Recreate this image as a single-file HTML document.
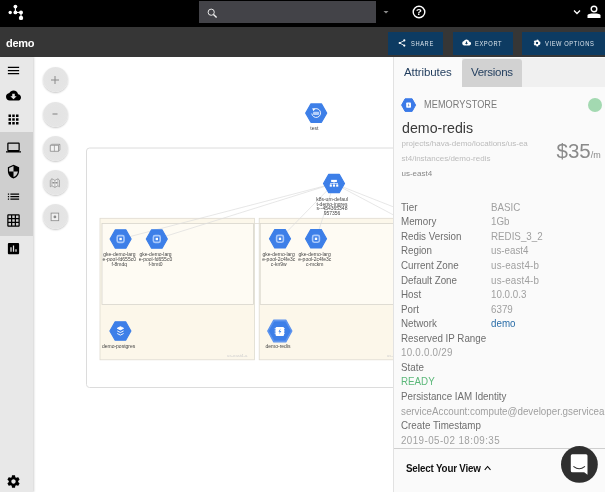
<!DOCTYPE html>
<html><head><meta charset="utf-8">
<style>
*{box-sizing:border-box;margin:0;padding:0}
html,body{width:605px;height:492px;overflow:hidden;background:#fff;font-family:"Liberation Sans",sans-serif;}
#top{position:absolute;left:0;top:0;width:605px;height:27px;background:#000}
#search{position:absolute;left:198.500px;top:1px;width:177.500px;height:21.800px;background:#434348}
#bar2{position:absolute;left:0;top:27px;width:605px;height:30px;background:#363636}
#title{position:absolute;left:6px;top:36.5px;color:#fff;font-weight:bold;font-size:11px;letter-spacing:-0.3px}
.btn{position:absolute;top:32px;height:23px;background:#0d3b62;color:#dbe4ec;font-size:7.2px;letter-spacing:0.75px;line-height:22px;white-space:nowrap}
.btn span{position:absolute;top:1px;transform:scaleX(0.8);transform-origin:0 50%}
#side{position:absolute;left:0;top:57px;width:33px;height:435px;background:#e8e8e8;box-shadow:1px 0 2px rgba(0,0,0,0.18)}
#sel{position:absolute;left:0;top:132px;width:33px;height:104px;background:#cfcfcf}
.ico{position:absolute}
.rb{position:absolute;left:42px;width:26px;height:26px}
.rb i{position:absolute;left:0.500px;top:0.800px;width:25px;height:25px;border-radius:50%;background:radial-gradient(circle,#e3e3e3 0%,#e5e5e5 70%,#ebebeb 100%);box-shadow:0 1px 2px rgba(0,0,0,0.22)}
#canvas{position:absolute;left:34px;top:57px;width:359px;height:435px;overflow:hidden}
#panel{position:absolute;left:393px;top:57px;width:212px;height:435px;background:#fafafa;border-left:1px solid #e2e2e2;overflow:hidden}
#tabs{position:absolute;left:0;top:1px;width:212px;height:29px;background:#f0f0f0}
#tabA{position:absolute;left:0;top:-1px;width:68px;height:30px;background:#fafafa;color:#1f3b5c;font-size:11.5px;letter-spacing:-0.1px;line-height:30px;padding-left:10px}
#tabV{position:absolute;left:68px;top:1px;width:60.300px;height:28px;background:#d2d2d2;border-radius:3px 3px 0 0;color:#1f3b5c;font-size:11.5px;letter-spacing:-0.3px;line-height:27px;padding-left:9px}
.t{position:absolute;white-space:nowrap;transform-origin:0 50%}
.lab{color:#6e6e6e;font-size:10.2px;transform:scaleX(0.96);margin-top:0.3px;margin-left:-0.8px}
.val{color:#a0a0a0;font-size:10.2px;transform:scaleX(0.96);margin-top:0.3px;margin-left:-0.8px}
#wrap{position:absolute;left:0;top:0;width:605px;height:492px;will-change:transform;overflow:hidden}
</style></head><body><div id="wrap">
<div id="top">
  <svg class="ico" style="left:0px;top:0px" width="30" height="27" viewBox="0 0 30 27"><g fill="#fff" stroke="#fff" stroke-width="1.1"><line x1="15.4" y1="6.6" x2="15.4" y2="12.4"/><line x1="15.4" y1="12.4" x2="21" y2="12.4"/><line x1="21" y1="12.4" x2="21" y2="17.9"/><circle cx="10.2" cy="12.5" r="1.7" stroke="none"/><circle cx="15.4" cy="6.6" r="1.9" stroke="none"/><circle cx="15.4" cy="12.4" r="1.9" stroke="none"/><circle cx="21" cy="12.4" r="2" stroke="none"/><circle cx="21" cy="17.9" r="2.2" stroke="none"/></g></svg>
  <div id="search"><svg class="ico" style="left:8.500px;top:7.200px" width="11" height="11" viewBox="0 0 11 11"><circle cx="4.200" cy="4.200" r="3.100" fill="none" stroke="#e8e8e8" stroke-width="1"/><line x1="6.500" y1="6.500" x2="9.600" y2="9.600" stroke="#f4f4f4" stroke-width="1.400"/></svg></div>
  <svg class="ico" style="left:381.500px;top:10px" width="8" height="5" viewBox="0 0 8 5"><path d="M1.500 1 L4 3.600 L6.500 1 Z" fill="#8a8a8a"/></svg>
  <svg class="ico" style="left:410.500px;top:3.500px" width="16" height="16" viewBox="0 0 16 16"><circle cx="8" cy="8" r="5.800" fill="none" stroke="#fff" stroke-width="1.4"/><text x="8" y="11.3" font-size="9.5" font-weight="bold" text-anchor="middle" fill="#fff" font-family="Liberation Sans, sans-serif">?</text></svg>
  <svg class="ico" style="left:572px;top:8px" width="10" height="8" viewBox="0 0 10 8"><path d="M2 2.5 L5 5.5 L8 2.5" fill="none" stroke="#fff" stroke-width="1.3"/></svg>
  <svg class="ico" style="left:586px;top:4px" width="16" height="16" viewBox="0 0 16 16"><circle cx="8" cy="5" r="2.8" fill="none" stroke="#fff" stroke-width="1.4"/><path d="M1.500 14 V11.600 C1.500 10 4 9.500 8 9.500 C12 9.500 14.500 10 14.500 11.600 V14 Z" fill="#fff"/></svg>
</div>
<div id="bar2"></div>
<div id="title">demo</div>
<div class="btn" style="left:388px;width:55px"><svg class="ico" style="left:10px;top:7px" width="8" height="8" viewBox="0 0 8 8"><g fill="#fff" stroke="#fff" stroke-width="0.8"><line x1="6.300" y1="1.500" x2="1.700" y2="4"/><line x1="1.700" y1="4" x2="6.300" y2="6.500"/><circle cx="6.300" cy="1.400" r="1.100" stroke="none"/><circle cx="1.700" cy="4" r="1.100" stroke="none"/><circle cx="6.300" cy="6.600" r="1.100" stroke="none"/></g></svg><span style="left:23px">SHARE</span></div>
<div class="btn" style="left:453px;width:60px"><svg class="ico" style="left:9px;top:7px" width="9" height="7" viewBox="0 0 9 7"><path d="M7.300 2.700 A2.900 2.900 0 0 0 1.900 2 A2.300 2.300 0 0 0 2.300 6.500 H7 A1.900 1.900 0 0 0 7.300 2.700 Z" fill="#fff"/><path d="M4.500 5.600 L2.900 3.900 H3.900 V2.600 H5.100 V3.900 H6.100 Z" fill="#0d3b62"/></svg><span style="left:22px">EXPORT</span></div>
<div class="btn" style="left:522px;width:83px"><svg class="ico" style="left:11px;top:7px" width="8" height="8" viewBox="0 0 8 8"><circle cx="4" cy="4" r="2.300" fill="none" stroke="#fff" stroke-width="2.200" stroke-dasharray="1.300 1.100"/><circle cx="4" cy="4" r="2" fill="none" stroke="#fff" stroke-width="1.400"/></svg><span style="left:23px">VIEW OPTIONS</span></div>

<div id="side"><div id="sel" style="top:75px"></div>
<svg class="ico" style="left:5.9px;top:5.7px" width="15" height="15" viewBox="0 0 24 24"><path d="M3 18h18v-2H3v2zm0-5h18v-2H3v2zm0-7v2h18V6H3z" fill="#000"/></svg>
<svg class="ico" style="left:5.9px;top:30.5px" width="15" height="15" viewBox="0 0 24 24"><path d="M19.35 10.04C18.67 6.59 15.64 4 12 4 9.11 4 6.6 5.64 5.35 8.04 2.34 8.36 0 10.91 0 14c0 3.31 2.69 6 6 6h13c2.76 0 5-2.24 5-5 0-2.64-2.05-4.78-4.65-4.960zM17 13l-5 5-5-5h3V9h4v4h3z" fill="#000"/></svg>
<svg class="ico" style="left:5.9px;top:54.5px" width="15" height="15" viewBox="0 0 24 24"><path d="M4 8h4V4H4v4zm6 12h4v-4h-4v4zm-6 0h4v-4H4v4zm0-6h4v-4H4v4zm6 0h4v-4h-4v4zm6-10v4h4V4h-4zm-6 4h4V4h-4v4zm6 6h4v-4h-4v4zm0 6h4v-4h-4v4z" fill="#000"/></svg>
<svg class="ico" style="left:5.9px;top:82.5px" width="15" height="15" viewBox="0 0 24 24"><path d="M20 18c1.100 0 1.990-.9 1.990-2L22 6c0-1.100-.9-2-2-2H4c-1.100 0-2 .9-2 2v10c0 1.100.9 2 2 2H0v2h24v-2h-4zM4 6h16v10H4V6z" fill="#000"/></svg>
<svg class="ico" style="left:5.9px;top:106.8px" width="15" height="15" viewBox="0 0 24 24"><path d="M12 1L3 5v6c0 5.550 3.840 10.740 9 12 5.160-1.260 9-6.450 9-12V5l-9-4zm0 10.990h7c-.53 4.120-3.280 7.790-7 8.940V12H5V6.300l7-3.110v8.800z" fill="#000"/></svg>
<svg class="ico" style="left:5.9px;top:131.5px" width="15" height="15" viewBox="0 0 24 24"><path d="M3 13h2v-2H3v2zm0 4h2v-2H3v2zm0-8h2V7H3v2zm4 4h14v-2H7v2zm0 4h14v-2H7v2zM7 7v2h14V7H7z" fill="#000"/></svg>
<svg class="ico" style="left:5.9px;top:155.5px" width="15" height="15" viewBox="0 0 24 24"><path d="M20 2H4c-1.100 0-2 .9-2 2v16c0 1.100.9 2 2 2h16c1.100 0 2-.9 2-2V4c0-1.100-.9-2-2-2zM8 20H4v-4h4v4zm0-6H4v-4h4v4zm0-6H4V4h4v4zm6 12h-4v-4h4v4zm0-6h-4v-4h4v4zm0-6h-4V4h4v4zm6 12h-4v-4h4v4zm0-6h-4v-4h4v4zm0-6h-4V4h4v4z" fill="#000"/></svg>
<svg class="ico" style="left:5.9px;top:183.8px" width="15" height="15" viewBox="0 0 24 24"><path d="M19 3H5c-1.100 0-2 .9-2 2v14c0 1.100.9 2 2 2h14c1.100 0 2-.9 2-2V5c0-1.100-.9-2-2-2zM9 17H7v-7h2v7zm4 0h-2V7h2v10zm4 0h-2v-4h2v4z" fill="#000"/></svg>
<svg class="ico" style="left:5.9px;top:417.1px" width="15" height="15" viewBox="0 0 24 24"><path d="M19.430 12.980c.04-.32.07-.64.07-.98s-.03-.66-.07-.98l2.110-1.650c.19-.15.24-.42.12-.64l-2-3.460c-.12-.22-.39-.3-.61-.22l-2.490 1c-.52-.4-1.080-.73-1.690-.98l-.38-2.650C14.460 2.180 14.250 2 14 2h-4c-.25 0-.46.18-.49.42l-.38 2.650c-.61.250-1.170.59-1.690.98l-2.490-1c-.23-.09-.49 0-.61.22l-2 3.460c-.13.22-.07.49.12.64l2.110 1.650c-.04.32-.07.65-.07.98s.03.66.07.98l-2.110 1.650c-.19.150-.24.420-.12.640l2 3.460c.12.220.39.300.61.220l2.490-1c.52.400 1.080.730 1.690.980l.38 2.650c.03.240.24.420.49.420h4c.25 0 .46-.18.490-.42l.38-2.650c.61-.25 1.170-.59 1.690-.98l2.490 1c.23.090.49 0 .61-.22l2-3.460c.12-.22.070-.49-.12-.64l-2.110-1.650zM12 15.500c-1.930 0-3.500-1.570-3.500-3.500s1.570-3.500 3.500-3.500 3.500 1.570 3.500 3.500-1.570 3.500-3.500 3.500z" fill="#000"/></svg>
</div>
<div class="rb" style="top:66.5px"><i></i><svg class="ico" style="left:0;top:0" width="26" height="26" viewBox="0 0 26 26"><path d="M9 13h8M13 9v8" stroke="#8a8a8a" stroke-width="1" fill="none"/></svg></div>
<div class="rb" style="top:100.8px"><i></i><svg class="ico" style="left:0;top:0" width="26" height="26" viewBox="0 0 26 26"><path d="M10.500 13h5" stroke="#8a8a8a" stroke-width="1.100" fill="none"/></svg></div>
<div class="rb" style="top:135.0px"><i></i><svg class="ico" style="left:0;top:0" width="26" height="26" viewBox="0 0 26 26"><path d="M8.300 10.300h8.200v6h-8.200z" fill="#f2f2f2" stroke="#8c8c8c" stroke-width="0.800"/><path d="M12.400 10.300v6M8.300 10.300l1.400-1h8.200l-1.400 1M17.900 9.300v5.800l-1.400 1.200" stroke="#8c8c8c" stroke-width="0.700" fill="none"/></svg></div>
<div class="rb" style="top:169.5px"><i></i><svg class="ico" style="left:0;top:0" width="26" height="26" viewBox="0 0 26 26"><path d="M8.300 10.200l1.600-1.400 3 1.600 3-1.600 1.600 1.400v6.600l-1.600-1-3 1.600-3-1.600-1.600 1z" fill="#f0f0f0" stroke="#8c8c8c" stroke-width="0.700"/><path d="M9.900 8.800v7M12.900 10.400v7M15.900 8.800v7M10 12.800h5.800" stroke="#8c8c8c" stroke-width="0.600" fill="none"/><circle cx="11.400" cy="12.800" r="0.800" fill="#888"/><circle cx="14.400" cy="12.800" r="0.800" fill="#888"/></svg></div>
<div class="rb" style="top:203.7px"><i></i><svg class="ico" style="left:0;top:0" width="26" height="26" viewBox="0 0 26 26"><rect x="9.100" y="9.100" width="7.600" height="7.600" stroke="#8c8c8c" stroke-width="0.800" fill="#f0f0f0"/><circle cx="12.900" cy="12.900" r="1.400" fill="#8a8a8a"/></svg></div>
<div id="canvas"></div>
<!--CV-->
<svg id="cv" class="ico" style="left:0;top:0" width="605" height="492" viewBox="0 0 605 492" font-family="Liberation Sans, sans-serif"><rect x="86.5" y="148" width="420" height="239.5" rx="3" fill="#fff" stroke="#dcdcdc" stroke-width="1"/><rect x="100" y="218.3" width="154.5" height="141.5" fill="#fcf7ea" stroke="#dedbd0" stroke-width="0.8"/><rect x="102" y="223.5" width="151.5" height="81" fill="#fefbf3" stroke="#d8d5cc" stroke-width="0.8"/><rect x="259.2" y="218.3" width="154.5" height="141.5" fill="#fcf7ea" stroke="#dedbd0" stroke-width="0.8"/><line x1="253.500" y1="223.500" x2="260.200" y2="223.500" stroke="#dedbd3" stroke-width="0.800"/><rect x="260.200" y="223.500" width="152.300" height="81" fill="#fefbf3" stroke="#d8d5cc" stroke-width="0.8"/><line x1="334" y1="183.5" x2="120.6" y2="239" stroke="#dcdcdc" stroke-width="0.7"/><line x1="334" y1="183.5" x2="156.8" y2="239" stroke="#dcdcdc" stroke-width="0.7"/><line x1="334" y1="183.5" x2="280" y2="238.8" stroke="#dcdcdc" stroke-width="0.7"/><line x1="334" y1="183.5" x2="316" y2="238.8" stroke="#dcdcdc" stroke-width="0.7"/><line x1="334" y1="183.5" x2="439" y2="239" stroke="#dcdcdc" stroke-width="0.7"/><line x1="334" y1="183.5" x2="475" y2="239" stroke="#dcdcdc" stroke-width="0.7"/><path d="M110.10 239.00 L115.35 229.80 L125.85 229.80 L131.10 239.00 L125.85 248.20 L115.35 248.20 Z" fill="#3d7fe8" stroke="#3d7fe8" stroke-width="1.2" stroke-linejoin="round"/><rect x="117.2" y="235.6" width="6.8" height="6.8" rx="1.6" fill="none" stroke="#a9c9fb" stroke-width="1.6"/><rect x="119.4" y="237.8" width="2.4" height="2.4" fill="#fff"/><text x="119.3" y="256.4" font-size="5.0" text-anchor="middle" fill="#444">gke-demo-larg</text><text x="119.3" y="261.0" font-size="5.0" text-anchor="middle" fill="#444">e-pool-fd655c0</text><text x="119.3" y="265.7" font-size="5.0" text-anchor="middle" fill="#444">f-8mdq</text><path d="M146.30 239.00 L151.55 229.80 L162.05 229.80 L167.30 239.00 L162.05 248.20 L151.55 248.20 Z" fill="#3d7fe8" stroke="#3d7fe8" stroke-width="1.2" stroke-linejoin="round"/><rect x="153.4" y="235.6" width="6.8" height="6.8" rx="1.6" fill="none" stroke="#a9c9fb" stroke-width="1.6"/><rect x="155.6" y="237.8" width="2.4" height="2.4" fill="#fff"/><text x="155.5" y="256.4" font-size="5.0" text-anchor="middle" fill="#444">gke-demo-larg</text><text x="155.5" y="261.0" font-size="5.0" text-anchor="middle" fill="#444">e-pool-fd655c0</text><text x="155.5" y="265.7" font-size="5.0" text-anchor="middle" fill="#444">f-bmt0</text><path d="M269.50 238.80 L274.75 229.60 L285.25 229.60 L290.50 238.80 L285.25 248.00 L274.75 248.00 Z" fill="#3d7fe8" stroke="#3d7fe8" stroke-width="1.2" stroke-linejoin="round"/><rect x="276.6" y="235.4" width="6.8" height="6.8" rx="1.6" fill="none" stroke="#a9c9fb" stroke-width="1.6"/><rect x="278.8" y="237.6" width="2.4" height="2.4" fill="#fff"/><text x="278.7" y="256.4" font-size="5.0" text-anchor="middle" fill="#444">gke-demo-larg</text><text x="278.7" y="261.0" font-size="5.0" text-anchor="middle" fill="#444">e-pool-2c4fe3c</text><text x="278.7" y="265.7" font-size="5.0" text-anchor="middle" fill="#444">c-kn9w</text><path d="M305.50 238.80 L310.75 229.60 L321.25 229.60 L326.50 238.80 L321.25 248.00 L310.75 248.00 Z" fill="#3d7fe8" stroke="#3d7fe8" stroke-width="1.2" stroke-linejoin="round"/><rect x="312.6" y="235.4" width="6.8" height="6.8" rx="1.6" fill="none" stroke="#a9c9fb" stroke-width="1.6"/><rect x="314.8" y="237.6" width="2.4" height="2.4" fill="#fff"/><text x="314.7" y="256.4" font-size="5.0" text-anchor="middle" fill="#444">gke-demo-larg</text><text x="314.7" y="261.0" font-size="5.0" text-anchor="middle" fill="#444">e-pool-2c4fe3c</text><text x="314.7" y="265.7" font-size="5.0" text-anchor="middle" fill="#444">c-mckm</text><path d="M305.70 113.10 L310.95 103.90 L321.45 103.90 L326.70 113.10 L321.45 122.30 L310.95 122.30 Z" fill="#3d7fe8" stroke="#3d7fe8" stroke-width="1.2" stroke-linejoin="round"/><path d="M313.300 109.700 A4.400 4.400 0 1 1 311.800 113.500" fill="none" stroke="#fff" stroke-width="0.900"/><path d="M312.200 108.200l3.100 0.300-1.900 2.700z" fill="#fff"/><rect x="313" y="111.800" width="6.200" height="3.200" rx="1" fill="#b5d0fb"/><text x="314.3" y="130.1" font-size="5.0" text-anchor="middle" fill="#444">test</text><path d="M323.50 183.50 L328.75 174.30 L339.25 174.30 L344.50 183.50 L339.25 192.70 L328.75 192.70 Z" fill="#3d7fe8" stroke="#3d7fe8" stroke-width="1.2" stroke-linejoin="round"/><g fill="#fff" transform="translate(334 183.300) scale(0.82) translate(-334 -183)"><rect x="330.500" y="178.800" width="7" height="2.600"/><rect x="333.600" y="181" width="0.800" height="2"/><rect x="329.700" y="182.600" width="8.600" height="0.800"/><rect x="329.700" y="182.600" width="0.800" height="2"/><rect x="333.600" y="182.600" width="0.800" height="2"/><rect x="337.500" y="182.600" width="0.800" height="2"/><rect x="328.800" y="184.500" width="2.600" height="2.600"/><rect x="332.700" y="184.500" width="2.600" height="2.600"/><rect x="336.600" y="184.500" width="2.600" height="2.600"/></g><text x="332.0" y="201.1" font-size="5.0" text-anchor="middle" fill="#444">k8s-um-defaul</text><text x="332.0" y="205.6" font-size="5.0" text-anchor="middle" fill="#444">t-demo-ingres</text><text x="332.0" y="210.1" font-size="5.0" text-anchor="middle" fill="#444">s--454365348</text><text x="332.0" y="214.6" font-size="5.0" text-anchor="middle" fill="#444">957356</text><path d="M109.90 331.00 L115.15 321.80 L125.65 321.80 L130.90 331.00 L125.65 340.20 L115.15 340.20 Z" fill="#3d7fe8" stroke="#3d7fe8" stroke-width="1.2" stroke-linejoin="round"/><g fill="none" stroke="#fff" stroke-width="0.900"><path d="M117.200 328.300l3.200-1.600 3.200 1.600-3.200 1.600z" fill="#fff"/><path d="M117.200 330.900l3.200 1.600 3.200-1.600M117.200 333.500l3.200 1.600 3.200-1.600"/></g><text x="118.6" y="348.2" font-size="5.0" text-anchor="middle" fill="#444">demo-postgres</text><path d="M267.70 331.00 L273.75 320.15 L285.85 320.15 L291.90 331.00 L285.85 341.85 L273.75 341.85 Z" fill="#5a92ee" stroke="#5a92ee" stroke-width="1.200" stroke-linejoin="round"/><path d="M269.55 331.00 L274.68 322.00 L284.93 322.00 L290.05 331.00 L284.93 340.00 L274.68 340.00 Z" fill="#3d7fe8" stroke="#3d7fe8" stroke-width="1.2" stroke-linejoin="round"/><rect x="275.600" y="327" width="8.400" height="9" rx="1" fill="#fff"/><path d="M280.600 328.500l-2.200 3.200h1.400l-0.700 2.600 2.200-3.200h-1.400z" fill="#3d7fe8"/><g stroke="#fff" stroke-width="0.600"><path d="M274.600 328.500h1.500M274.600 330.200h1.500M274.600 331.900h1.500M274.600 333.600h1.500M283.500 328.500h1.500M283.500 330.200h1.500M283.500 331.900h1.500M283.500 333.600h1.500"/></g><text x="278.0" y="348.2" font-size="5.0" text-anchor="middle" fill="#444">demo-redis</text><text x="237.200" y="357" font-size="4.300" text-anchor="middle" fill="#cfcfcf">us-east4-a</text><text x="397" y="357" font-size="4.300" text-anchor="middle" fill="#cfcfcf">us-east4-b</text></svg>
<!--/CV-->
<div id="panel">
  <div id="tabs"><div id="tabA">Attributes</div><div id="tabV">Versions</div></div>
<svg class="ico" style="left:6px;top:39px" width="17" height="17" viewBox="0 0 17 17"><path d="M1.600 9.100 L5.100 2.800 H12.100 L15.600 9.100 L12.100 15.400 H5.100 Z" fill="#3b7ae8" stroke="#3b7ae8" stroke-width="1" stroke-linejoin="round"/><rect x="6.200" y="6.400" width="4.800" height="5.400" rx="0.800" fill="#fff"/><path d="M9 7.300l-1.300 2h0.900l-0.400 1.600 1.300-2h-0.900z" fill="#3b5fb0"/></svg>
<div class="t " style="left:30.0px;top:39.5px;line-height:16px;color:#7a7a7a;font-size:10.5px;letter-spacing:0.1px;transform:scaleX(0.87);margin-top:-1px">MEMORYSTORE</div>
<div style="position:absolute;left:193.500px;top:40.500px;width:14.800px;height:14.800px;border-radius:50%;background:#a3d9b1"></div>
<div class="t " style="left:7.5px;top:63.0px;line-height:16px;color:#3a3a3a;font-size:14.8px;transform:scaleX(0.96);margin-top:-0.5px">demo-redis</div>
<div class="t " style="left:7.5px;top:79.4px;line-height:16px;color:#bbb;font-size:8px">projects/hava-demo/locations/us-ea</div>
<div class="t " style="left:7.5px;top:93.5px;line-height:16px;color:#bbb;font-size:8px">st4/instances/demo-redis</div>
<div class="t " style="left:7.5px;top:108.5px;line-height:16px;color:#888;font-size:8px">us-east4</div>
<div class="t " style="left:162.5px;top:85.5px;line-height:16px;color:#8a8a8a;font-size:20.5px;line-height:24px;margin-top:-4px">$35<span style="font-size:9px">/m</span></div>
<div class="t lab" style="left:7.5px;top:142.5px;line-height:16px;">Tier</div>
<div class="t val" style="left:97.5px;top:142.5px;line-height:16px;">BASIC</div>
<div class="t lab" style="left:7.5px;top:157.1px;line-height:16px;">Memory</div>
<div class="t val" style="left:97.5px;top:157.1px;line-height:16px;">1Gb</div>
<div class="t lab" style="left:7.5px;top:171.6px;line-height:16px;">Redis Version</div>
<div class="t val" style="left:97.5px;top:171.6px;line-height:16px;">REDIS_3_2</div>
<div class="t lab" style="left:7.5px;top:186.2px;line-height:16px;">Region</div>
<div class="t val" style="left:97.5px;top:186.2px;line-height:16px;">us-east4</div>
<div class="t lab" style="left:7.5px;top:200.7px;line-height:16px;">Current Zone</div>
<div class="t val" style="left:97.5px;top:200.7px;line-height:16px;"><span style="letter-spacing:0.200px">us-east4-b</span></div>
<div class="t lab" style="left:7.5px;top:215.3px;line-height:16px;">Default Zone</div>
<div class="t val" style="left:97.5px;top:215.3px;line-height:16px;"><span style="letter-spacing:0.200px">us-east4-b</span></div>
<div class="t lab" style="left:7.5px;top:229.9px;line-height:16px;">Host</div>
<div class="t val" style="left:97.5px;top:229.9px;line-height:16px;">10.0.0.3</div>
<div class="t lab" style="left:7.5px;top:244.4px;line-height:16px;">Port</div>
<div class="t val" style="left:97.5px;top:244.4px;line-height:16px;">6379</div>
<div class="t lab" style="left:7.5px;top:259.0px;line-height:16px;">Network</div>
<div class="t val" style="left:97.5px;top:259.0px;line-height:16px;"><span style="color:#2a6da8">demo</span></div>
<div class="t lab" style="left:7.5px;top:273.5px;line-height:16px;">Reserved IP Range</div>
<div class="t val" style="left:7.5px;top:288.1px;line-height:16px;"><span style="letter-spacing:0.250px">10.0.0.0/29</span></div>
<div class="t lab" style="left:7.5px;top:302.7px;line-height:16px;">State</div>
<div class="t val" style="left:7.5px;top:317.2px;line-height:16px;"><span style="color:#5cb87a">READY</span></div>
<div class="t lab" style="left:7.5px;top:331.8px;line-height:16px;">Persistance IAM Identity</div>
<div class="t val" style="left:7.5px;top:346.3px;line-height:16px;">serviceAccount:compute@developer.gserviceaccount.com</div>
<div class="t lab" style="left:7.5px;top:360.9px;line-height:16px;">Create Timestamp</div>
<div class="t val" style="left:7.5px;top:375.5px;line-height:16px;"><span style="letter-spacing:0.450px">2019-05-02 18:09:35</span></div>
<div style="position:absolute;left:0;top:390.500px;width:212px;height:45px;background:#fafafa;border-top:1px solid #cfcfcf"></div>
<div class="t " style="left:12.0px;top:404.4px;line-height:16px;color:#111;font-weight:bold;font-size:10.2px;letter-spacing:-0.2px;transform:scaleX(0.96)">Select Your View<svg width="8" height="6" viewBox="0 0 8 6" style="margin-left:3.500px;vertical-align:1.500px"><path d="M1 4.800 L4 1.500 L7 4.800" fill="none" stroke="#000" stroke-width="1.100"/></svg></div>
<svg class="ico" style="left:166.500px;top:389px" width="37" height="37" viewBox="0 0 37 37"><circle cx="18.400" cy="18.400" r="18.400" fill="#2f2f2f"/><path d="M11.300 8.200 H25 A1.500 1.500 0 0 1 26.500 9.700 V28.800 L23.200 26.300 H11.300 A1.500 1.500 0 0 1 9.800 24.800 V9.700 A1.500 1.500 0 0 1 11.300 8.200 Z" fill="#fff"/><path d="M12.800 20.600 Q18.200 24.800 23.600 20.600" fill="none" stroke="#2f2f2f" stroke-width="1.100" stroke-linecap="round"/></svg>

</div>
</div></body></html>
